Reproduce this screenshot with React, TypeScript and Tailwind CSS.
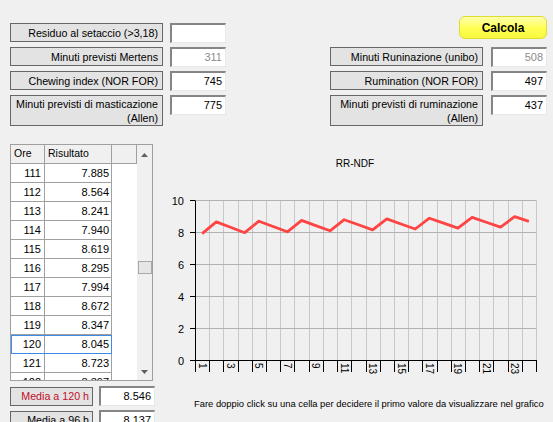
import React from "react"

type Field = { label: string[]; value: string; muted?: boolean }

const leftFields: Field[] = [
  { label: ["Residuo al setaccio (>3,18)"], value: "" },
  { label: ["Minuti previsti Mertens"], value: "311", muted: true },
  { label: ["Chewing index (NOR FOR)"], value: "745" },
  { label: ["Minuti previsti di masticazione", "(Allen)"], value: "775" },
]

const rightFields: Field[] = [
  { label: ["Minuti Runinazione (unibo)"], value: "508", muted: true },
  { label: ["Rumination (NOR FOR)"], value: "497" },
  { label: ["Minuti previsti di ruminazione", "(Allen)"], value: "437" },
]

const rows: [number, string][] = [
  [111, "7.885"],
  [112, "8.564"],
  [113, "8.241"],
  [114, "7.940"],
  [115, "8.619"],
  [116, "8.295"],
  [117, "7.994"],
  [118, "8.672"],
  [119, "8.347"],
  [120, "8.045"],
  [121, "8.723"],
  [122, "8.397"],
]

function InputBox({ value, muted, className = "" }: { value: string; muted?: boolean; className?: string }) {
  return (
    <div
      className={`h-[20px] w-[56px] shrink-0 bg-white border-t-2 border-l-2 border-r border-b border-t-[#858585] border-l-[#858585] border-r-[#e8e8e8] border-b-[#e8e8e8] flex items-center justify-end pr-[3px] ${
        muted ? "text-[#8c8c8c]" : "text-black"
      } ${className}`}
    >
      {value}
    </div>
  )
}

function FieldRow({ field, gap }: { field: Field; gap: string }) {
  const tall = field.label.length > 1
  return (
    <div className={`flex items-start ${gap}`}>
      <div
        className={`w-[153px] ${tall ? "h-[31px]" : "h-[19px]"} border border-[#666] bg-[#e3e3e3] flex flex-col items-end justify-center pr-[4px] leading-[14px] whitespace-nowrap text-[10.7px]`}
      >
        {field.label.map((l) => (
          <span key={l}>{l}</span>
        ))}
      </div>
      <InputBox value={field.value} muted={field.muted} />
    </div>
  )
}

function Arrow({ up }: { up?: boolean }) {
  return (
    <svg width="7" height="4" viewBox="0 0 7 4">
      <path d={up ? "M0 4 L3.5 0 L7 4 Z" : "M0 0 L3.5 4 L7 0 Z"} fill="#606060" />
    </svg>
  )
}

function ResultTable() {
  return (
    <div className="w-[143px] h-[237px] border border-[#a0a0a0] bg-white flex overflow-hidden">
      <div className="flex-1 flex flex-col overflow-hidden">
        <div className="flex h-[19px] shrink-0 bg-[#f0f0f0] text-[10.5px]">
          <div className="w-[34px] border-r border-b border-[#a0a0a0] pl-[3px] flex items-center">Ore</div>
          <div className="w-[67px] border-r border-b border-[#a0a0a0] pl-[3px] flex items-center">Risultato</div>
          <div className="flex-1 border-r border-b border-[#a0a0a0]" />
        </div>
        {rows.map(([h, v]) => (
          <div key={h} className="flex h-[19px] shrink-0">
            <div className={`flex ${h === 120 ? "outline outline-[#3c8ce6] -outline-offset-1" : ""}`}>
              <div className="w-[34px] h-[19px] border-r border-b border-[#a0a0a0] pr-[3px] flex items-center justify-end">
                {h}
              </div>
              <div className="w-[67px] h-[19px] border-r border-b border-[#a0a0a0] pr-[2px] flex items-center justify-end">
                {v}
              </div>
            </div>
          </div>
        ))}
      </div>
      <div className="w-[15px] shrink-0 bg-[#f0f0f0] flex flex-col items-center">
        <div className="h-[19px] flex items-center">
          <Arrow up />
        </div>
        <div className="h-[97px]" />
        <div className="w-[14px] h-[13px] bg-[#e6e6e6] border border-[#a8a8a8]" />
        <div className="flex-1" />
        <div className="h-[16px] flex items-center">
          <Arrow />
        </div>
      </div>
    </div>
  )
}

function Chart() {
  const x0 = 35
  const x1 = 376
  const cat = (x1 - x0) / 24
  const yAt = (v: number) => 216.5 - 16 * v
  const px = (x: number) => Math.round(x) + 0.5

  const peak = (k: number) => 8.66 + 0.047 * k
  const trough = (k: number) => 7.93 + 0.058 * k
  const pts = Array.from({ length: 24 }, (_, i) => {
    const k = Math.floor(i / 3)
    const v = i % 3 === 0 ? trough(k) : i % 3 === 1 ? peak(k) : (peak(k) + trough(k + 1)) / 2
    return `${(x0 + (i + 0.5) * cat).toFixed(1)},${yAt(v).toFixed(1)}`
  })

  return (
    <svg width="393" height="254" viewBox="0 0 393 254" className="block">
      <text x="195" y="23" fontSize="10" textAnchor="middle" fill="#000">
        RR-NDF
      </text>
      {Array.from({ length: 24 }, (_, i) => (
        <line key={`v${i}`} x1={px(x0 + (i + 1) * cat)} x2={px(x0 + (i + 1) * cat)} y1={yAt(10)} y2={yAt(0)} stroke="#c8c8c8" />
      ))}
      {[2, 4, 6, 8, 10].map((v) => (
        <line key={`h${v}`} x1={x0} x2={px(x1)} y1={yAt(v)} y2={yAt(v)} stroke="#b2b2b2" />
      ))}
      {[0, 2, 4, 6, 8, 10].map((v) => (
        <g key={`y${v}`}>
          <line x1={30} x2={x0} y1={yAt(v)} y2={yAt(v)} stroke="#000" />
          <text x="24" y={yAt(v)} fontSize="11" textAnchor="end" dominantBaseline="central" fill="#000">
            {v}
          </text>
        </g>
      ))}
      <line x1={x0 + 0.5} x2={x0 + 0.5} y1={yAt(10)} y2={yAt(0)} stroke="#000" />
      <line x1={x0} x2={px(x1) + 0.5} y1={yAt(0)} y2={yAt(0)} stroke="#000" />
      {Array.from({ length: 25 }, (_, i) => (
        <line key={`t${i}`} x1={px(x0 + i * cat)} x2={px(x0 + i * cat)} y1={yAt(0)} y2={228} stroke="#000" />
      ))}
      {Array.from({ length: 12 }, (_, j) => {
        const n = j * 2 + 1
        const cx = x0 + (n - 0.5) * cat
        return (
          <text
            key={`l${n}`}
            x={cx}
            y={219}
            fontSize="10"
            fill="#000"
            dominantBaseline="central"
            transform={`rotate(90 ${cx} 219)`}
          >
            {n}
          </text>
        )
      })}
      <polyline points={pts.join(" ")} fill="none" stroke="#ff4444" strokeWidth="2.8" strokeLinejoin="round" />
    </svg>
  )
}

export default function App() {
  return (
    <div className="w-[553px] h-[422px] overflow-hidden bg-[#f0f0f0] text-[11px] text-black font-['Liberation_Sans',Arial,sans-serif]">
      <div className="h-[144px] flex justify-between items-start pl-[10px] pr-[6px] pt-[16px]">
        <div className="mt-[7px] flex flex-col gap-[4px]">
          {leftFields.map((f) => (
            <FieldRow key={f.label[0]} field={f} gap="gap-[7px]" />
          ))}
        </div>
        <div className="flex flex-col items-end">
          <button className="w-[88px] h-[23px] rounded-[6px] border border-[#dede30] bg-linear-to-b from-[#ffffa8] via-[#ffff55] to-[#f8f840] font-bold text-[12px] text-black flex items-center justify-center">
            Calcola
          </button>
          <div className="mt-[8px] flex flex-col gap-[4px]">
            {rightFields.map((f) => (
              <FieldRow key={f.label[0]} field={f} gap="gap-[8px]" />
            ))}
          </div>
        </div>
      </div>
      <div className="flex">
        <div className="w-[160px] shrink-0 pl-[10px]">
          <ResultTable />
          <div className="mt-[5px] flex flex-col gap-[4px]">
            <div className="flex items-start gap-[6px]">
              <div className="w-[83px] h-[19px] mt-[1px] border border-[#666] bg-[#e3e3e3] text-[#c0102a] text-[10.7px] flex items-center justify-end pr-[3px]">
                Media a 120 h
              </div>
              <InputBox value="8.546" className="w-[55px]" />
            </div>
            <div className="flex items-start gap-[6px]">
              <div className="w-[83px] h-[19px] mt-[1px] border border-[#666] bg-[#e3e3e3] text-[10.7px] flex items-center justify-end pr-[3px]">
                Media a 96 h
              </div>
              <InputBox value="8.137" className="w-[55px]" />
            </div>
          </div>
        </div>
        <div className="flex-1 flex flex-col">
          <Chart />
          <p className="pl-[34px] text-[9.4px] leading-[12px] whitespace-nowrap">
            Fare doppio click su una cella per decidere il primo valore da visualizzare nel grafico
          </p>
        </div>
      </div>
    </div>
  )
}
